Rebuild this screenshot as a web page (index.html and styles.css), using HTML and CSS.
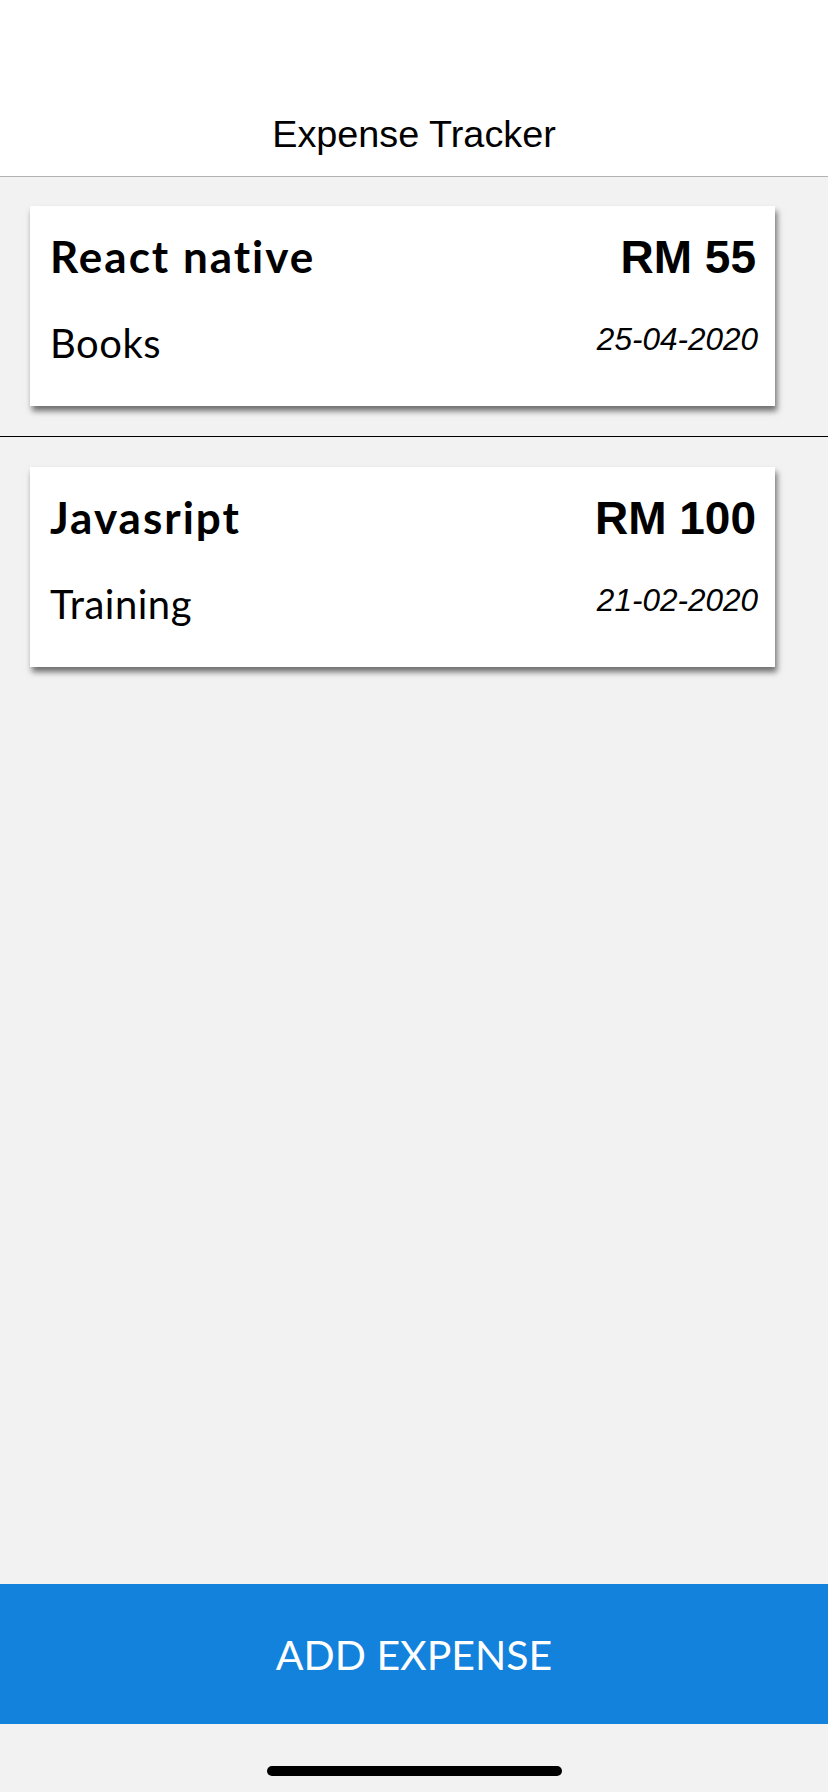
FILE: index.html
```html
<!DOCTYPE html>
<html>
<head>
<meta charset="utf-8">
<link rel="stylesheet" href="styles.css">
</head>
<body>
<div class="screen">
  <header class="header"><h1 class="title">Expense Tracker</h1></header>
  <main class="list">
    <div class="item">
      <div class="card">
        <div class="row top">
          <span class="name">React native</span>
          <span class="amount">RM 55</span>
        </div>
        <div class="row bottom">
          <span class="category">Books</span>
          <span class="date">25-04-2020</span>
        </div>
      </div>
    </div>
    <div class="separator"></div>
    <div class="item">
      <div class="card">
        <div class="row top">
          <span class="name">Javasript</span>
          <span class="amount">RM 100</span>
        </div>
        <div class="row bottom">
          <span class="category">Training</span>
          <span class="date">21-02-2020</span>
        </div>
      </div>
    </div>
  </main>
  <button class="add-btn">ADD EXPENSE</button>
  <div class="home-area"><div class="home-indicator"></div></div>
</div>
</body>
</html>
```

FILE: styles.css
```css
* { box-sizing: border-box; }
html, body { margin: 0; padding: 0; }
body { background: #f2f2f2; }
.screen {
  width: 828px;
  height: 1792px;
  display: flex;
  flex-direction: column;
  background: #f2f2f2;
}
.header {
  background: #ffffff;
  height: 177px;
  padding-top: 113px;
  border-bottom: 1px solid #b3b3b3;
  display: flex;
  justify-content: center;
}
.title {
  margin: 0;
  font-family: "Liberation Sans", Arial, sans-serif;
  font-weight: 400;
  font-size: 37.8px;
  line-height: 43px;
  color: #000;
}
.list { flex: 1; }
.item { padding: 29px 0 30px 30px; }
.item + .separator + .item { padding-top: 30px; }
.separator { height: 1px; background: #000; }
.card {
  width: 745px;
  height: 200px;
  background: #fff;
  padding: 0 19px 0 20px;
  box-shadow: 2px 5px 6px rgba(0,0,0,0.55);
}
.row {
  display: flex;
  justify-content: space-between;
}
.row.top {
  padding-top: 24px;
  height: 100px;
  align-items: baseline;
}
.row.bottom { align-items: flex-start; }
.name {
  font-family: "Lato", sans-serif;
  font-weight: 700;
  font-size: 44px;
  letter-spacing: 2px;
  line-height: 52px;
  color: #000;
}
.amount {
  font-family: "Liberation Sans", Arial, sans-serif;
  font-weight: 700;
  font-size: 46px;
  line-height: 52px;
  color: #000;
}
.category {
  font-family: "Lato", sans-serif;
  font-weight: 400;
  font-size: 40px;
  letter-spacing: 0.5px;
  line-height: 48px;
  margin-top: 13px;
  color: #000;
}
.date {
  font-family: "Liberation Sans", Arial, sans-serif;
  font-style: italic;
  font-size: 31.5px;
  line-height: 34px;
  padding-top: 16px;
  margin-right: -2px;
  color: #000;
}
.add-btn {
  display: block;
  height: 140px;
  width: 100%;
  border: 0;
  margin: 0;
  background: #1282dc;
  color: #fff;
  font-family: "Lato", sans-serif;
  font-weight: 400;
  font-size: 41px;
  padding: 0;
}
.home-area {
  height: 68px;
  display: flex;
  justify-content: center;
  padding-top: 42px;
}
.home-indicator {
  width: 295px;
  height: 10px;
  border-radius: 5px;
  background: #000;
}
```
